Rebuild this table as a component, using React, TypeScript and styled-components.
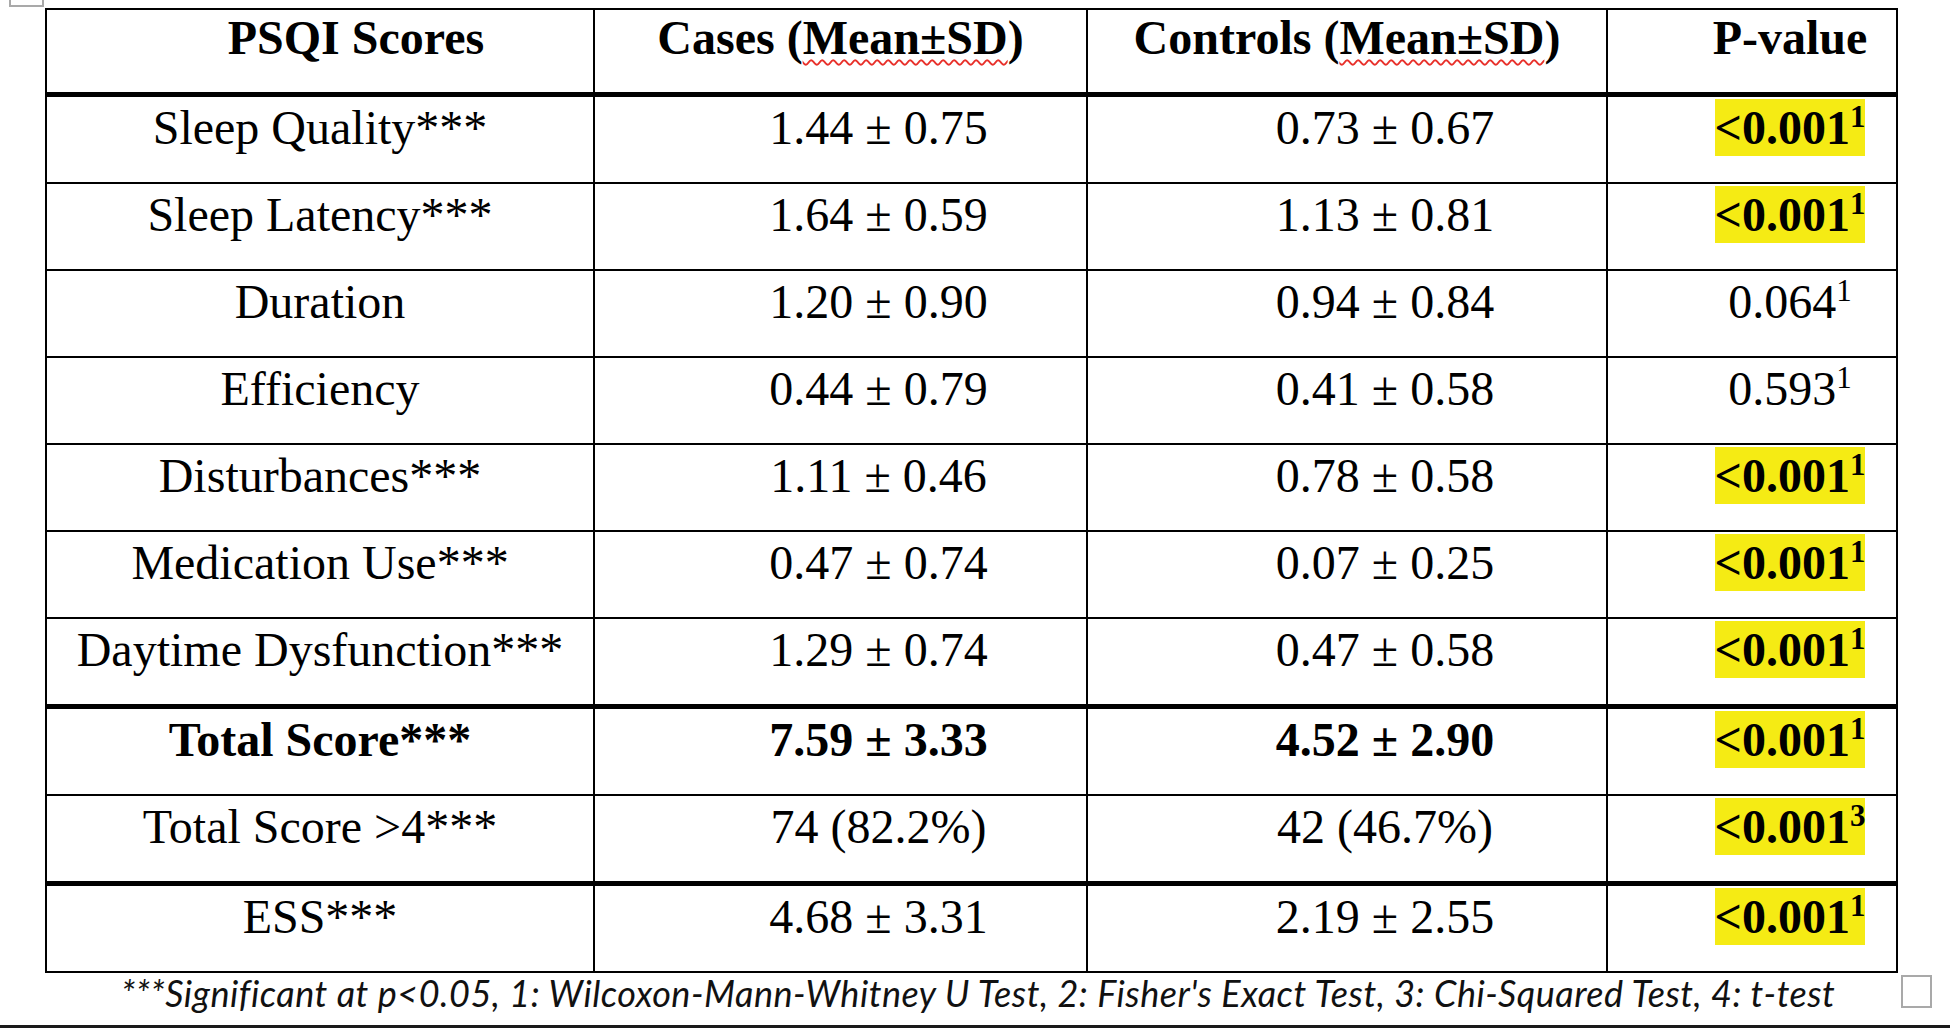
import React from 'react'
import styled, { createGlobalStyle } from 'styled-components'

const GlobalStyle = createGlobalStyle`
  html, body {
    margin: 0;
    padding: 0;
    background: #fff;
  }
  body {
    width: 1950px;
    height: 1030px;
    overflow: hidden;
    color: #000;
  }
`

type Row = {
  label: string
  cases: string
  controls: string
  p: string
  sup: string
  sig: boolean
  bold?: boolean
  thick?: boolean
}

const rows: Row[] = [
  { label: 'Sleep Quality***', cases: '1.44 ± 0.75', controls: '0.73 ± 0.67', p: '<0.001', sup: '1', sig: true },
  { label: 'Sleep Latency***', cases: '1.64 ± 0.59', controls: '1.13 ± 0.81', p: '<0.001', sup: '1', sig: true },
  { label: 'Duration', cases: '1.20 ± 0.90', controls: '0.94 ± 0.84', p: '0.064', sup: '1', sig: false },
  { label: 'Efficiency', cases: '0.44 ± 0.79', controls: '0.41 ± 0.58', p: '0.593', sup: '1', sig: false },
  { label: 'Disturbances***', cases: '1.11 ± 0.46', controls: '0.78 ± 0.58', p: '<0.001', sup: '1', sig: true },
  { label: 'Medication Use***', cases: '0.47 ± 0.74', controls: '0.07 ± 0.25', p: '<0.001', sup: '1', sig: true },
  { label: 'Daytime Dysfunction***', cases: '1.29 ± 0.74', controls: '0.47 ± 0.58', p: '<0.001', sup: '1', sig: true, thick: true },
  { label: 'Total Score***', cases: '7.59 ± 3.33', controls: '4.52 ± 2.90', p: '<0.001', sup: '1', sig: true, bold: true },
  { label: 'Total Score >4***', cases: '74 (82.2%)', controls: '42 (46.7%)', p: '<0.001', sup: '3', sig: true, thick: true },
  { label: 'ESS***', cases: '4.68 ± 3.31', controls: '2.19 ± 2.55', p: '<0.001', sup: '1', sig: true },
]

const App = () => (
  <Page>
    <GlobalStyle />
    <TopHandle />
    <Sheet>
      <Table>
        <HeadCell $shift={72}>PSQI Scores</HeadCell>
        <HeadCell>
          Cases (<Spell>Mean±SD</Spell>)
        </HeadCell>
        <HeadCell>
          Controls (<Spell>Mean±SD</Spell>)
        </HeadCell>
        <HeadCell $shift={76}>P-value</HeadCell>

        {rows.map(r => (
          <React.Fragment key={r.label}>
            <Cell $thick={r.thick} $bold={r.bold}>
              {r.label}
            </Cell>
            <Cell $thick={r.thick} $bold={r.bold} $shift={76}>
              {r.cases}
            </Cell>
            <Cell $thick={r.thick} $bold={r.bold} $shift={76}>
              {r.controls}
            </Cell>
            <Cell $thick={r.thick} $bold={r.sig} $shift={76}>
              {r.sig ? (
                <Mark>
                  {r.p}
                  <Sup>{r.sup}</Sup>
                </Mark>
              ) : (
                <>
                  {r.p}
                  <Sup>{r.sup}</Sup>
                </>
              )}
            </Cell>
          </React.Fragment>
        ))}
      </Table>
      <Note>
        ***Significant at p&lt;0.05, 1: Wilcoxon-Mann-Whitney U Test, 2: Fisher's Exact Test, 3:
        Chi-Squared Test, 4: t-test
      </Note>
    </Sheet>
    <Rule />
    <CornerHandle />
  </Page>
)

const Page = styled.main`
  position: relative;
  width: 1950px;
  height: 1030px;
  overflow: hidden;
  background: #fff;
`

const Sheet = styled.section`
  padding: 8px 0 0 45px;
`

const Table = styled.div`
  display: grid;
  grid-template-columns: 548px 493px 520px 290px;
  width: max-content;
  border-top: 2px solid #000;
  border-left: 2px solid #000;
`

const Cell = styled.div<{ $shift?: number; $thick?: boolean; $bold?: boolean }>`
  box-sizing: border-box;
  height: ${p => (p.$thick ? 90 : 87)}px;
  border-right: 2px solid #000;
  border-bottom: ${p => (p.$thick ? 5 : 2)}px solid #000;
  padding: 2px 0 0 ${p => p.$shift ?? 0}px;
  text-align: center;
  white-space: nowrap;
  font-family: 'Liberation Serif', 'Times New Roman', serif;
  font-size: 48px;
  line-height: 57px;
  font-weight: ${p => (p.$bold ? 700 : 400)};
`

const HeadCell = styled.div<{ $shift?: number }>`
  box-sizing: border-box;
  height: 87px;
  border-right: 2px solid #000;
  border-bottom: 5px solid #000;
  padding: 0 0 0 ${p => p.$shift ?? 0}px;
  text-align: center;
  white-space: nowrap;
  font-family: 'Liberation Serif', 'Times New Roman', serif;
  font-size: 48px;
  line-height: 55px;
  font-weight: 700;
`

const Spell = styled.span`
  text-decoration: underline wavy #e8302a;
  text-decoration-thickness: 2px;
  text-underline-offset: 5px;
`

const Mark = styled.span`
  display: inline-block;
  height: 57px;
  line-height: 57px;
  background: #f5eb14;
`

const Sup = styled.sup`
  font-size: 31px;
  line-height: 0;
  vertical-align: 17px;
`

const Note = styled.p`
  margin: 0 0 0 76px;
  font-family: Lato, 'Open Sans', sans-serif;
  font-style: italic;
  font-size: 36px;
  letter-spacing: 0.5px;
  line-height: 40px;
  color: #111;
  white-space: nowrap;
`

const Rule = styled.div`
  margin-top: 12px;
  height: 3px;
  background: #1a1a1a;
`

const TopHandle = styled.div`
  position: absolute;
  left: 9px;
  top: -28px;
  width: 31px;
  height: 31px;
  border: 2px solid #a9a9a9;
`

const CornerHandle = styled.div`
  position: absolute;
  left: 1901px;
  top: 975px;
  width: 27px;
  height: 29px;
  border: 2px solid #a9a9a9;
`

export default App
